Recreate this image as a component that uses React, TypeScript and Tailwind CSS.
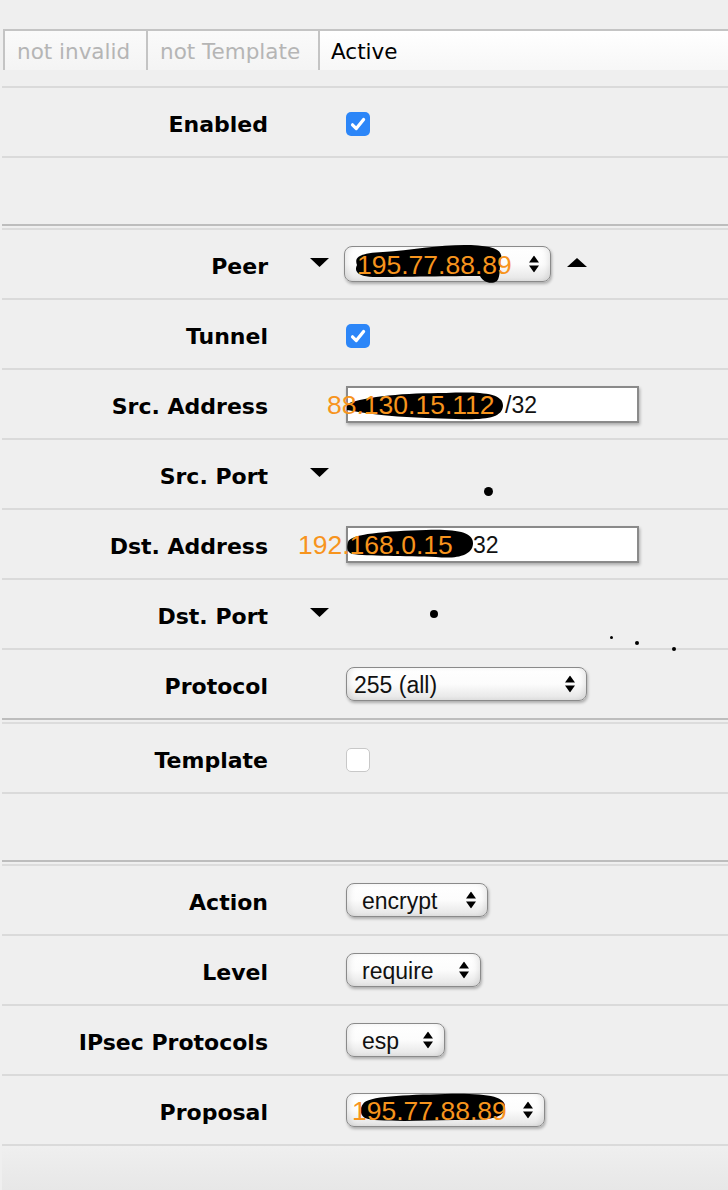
import React from "react";

const ORANGE = "text-[#f7941d]";

function DownTri() {
  return (
    <svg width="19" height="9" viewBox="0 0 19 9" className="-mt-[4px]">
      <polygon points="0,0 19,0 9.5,9" fill="#000" />
    </svg>
  );
}

function UpTri() {
  return (
    <svg width="20" height="9" viewBox="0 0 20 9" className="-mt-[4px]">
      <polygon points="0,9 20,9 10,0" fill="#000" />
    </svg>
  );
}

function Arrows() {
  return (
    <svg width="10" height="17" viewBox="0 0 10 17" className="absolute right-[11px] top-1/2 -translate-y-1/2">
      <polygon points="0,7 5,0 10,7" fill="#000" />
      <polygon points="0,10 10,10 5,17" fill="#000" />
    </svg>
  );
}

function Check({ on }: { on: boolean }) {
  if (!on)
    return <div className="w-[24px] h-[24px] rounded-[5px] bg-white border border-[#c8c8c8] mt-[4px]" />;
  return (
    <div className="w-[24px] h-[24px] rounded-[5px] bg-[#2c86f8] flex items-center justify-center mt-[4px]">
      <svg width="24" height="24" viewBox="0 0 24 24">
        <path d="M6.5 12.8 L10.3 16.6 L17.6 7.4" fill="none" stroke="#fff" strokeWidth="3.2" strokeLinecap="round" strokeLinejoin="round" />
      </svg>
    </div>
  );
}

const labelCls =
  "w-[266px] text-right font-['DejaVu_Sans',Verdana,sans-serif] font-bold text-[22px] leading-none text-black translate-y-[3px]";

function Row({
  label,
  slot,
  children,
}: {
  label: string;
  slot?: React.ReactNode;
  children?: React.ReactNode;
}) {
  return (
    <div className="flex items-center h-[70px] border-b-2 border-[#dadada]">
      <div className={labelCls}>{label}</div>
      <div className="w-[78px] flex items-center pl-[42px]">{slot}</div>
      <div className="flex-1 flex items-center">{children}</div>
    </div>
  );
}

const selectBase =
  "relative flex items-center pt-[3px] rounded-[8px] border-[1.5px] border-[#8a8a8a] bg-linear-to-b from-white via-[#fcfcfc] to-[#e4e4e4] shadow-[inset_5px_0_6px_-3px_rgba(0,0,0,0.10),inset_-5px_0_6px_-3px_rgba(0,0,0,0.10),1px_2px_3px_rgba(0,0,0,0.28)] font-['Liberation_Sans',Arial,sans-serif] leading-none text-[#111]";

const inputBase =
  "relative flex items-center pt-[3px] bg-white border-2 border-[#8a8a8a] shadow-[1px_2px_3px_rgba(0,0,0,0.28)] w-[293px] h-[37px] font-['Liberation_Sans',Arial,sans-serif] leading-none text-[#111] text-[23px]";

export default function App() {
  return (
    <div className="relative w-[728px] h-[1190px] bg-[#efefef] flex flex-col overflow-hidden">
      <div className="h-[29px]" />
      {/* tabs */}
      <div className="flex h-[41px] ml-[3px] font-['DejaVu_Sans',Verdana,sans-serif] text-[21.5px] leading-none">
        <div className="w-[143px] border-t-2 border-l-2 border-[#c4c4c4] bg-linear-to-b from-[#fafafa] to-[#f4f4f4] flex items-center pl-[12px] pt-[2px] text-[#b5b5b5]">
          not invalid
        </div>
        <div className="w-[172px] border-t-2 border-l-2 border-[#c4c4c4] bg-linear-to-b from-[#fafafa] to-[#f4f4f4] flex items-center pl-[12px] pt-[2px] text-[#b5b5b5]">
          not Template
        </div>
        <div className="flex-1 border-t-2 border-l-2 border-[#c4c4c4] bg-linear-to-b from-white to-[#f7f7f7] flex items-center pl-[11px] pt-[2px] text-black">
          Active
        </div>
      </div>
      <div className="h-[16px]" />

      <div className="ml-[2px] flex flex-col flex-1">
        <div className="h-[2px] bg-[#dadada]" />
        <Row label="Enabled">
          <Check on />
        </Row>
        <div className="h-[68px] border-b-2 border-[#bdbdbd]" />
        <div className="h-[4px] border-b-2 border-[#dcdcdc]" />

        <Row label="Peer" slot={<DownTri />}>
          <div className={`${selectBase} w-[207px] h-[36px] -ml-[2px] pl-[12px]`}>
            <svg className="absolute -left-[2px] -top-[2px] overflow-visible" width="210" height="40">
              <path
                d="M14 20 C10 10, 22 8, 40 7 C70 5, 100 -1, 128 0 C150 1, 160 5, 158 13 C156 21, 158 31, 154 36 C148 40, 140 37, 137 31 C110 31, 60 32, 30 32 C18 32, 10 28, 14 20 Z"
                fill="#000"
              />
            </svg>
            <span className={`relative z-10 ${ORANGE} text-[26.5px]`}>195.77.88.89</span>
            <Arrows />
          </div>
          <div className="ml-[16px] flex items-center">
            <UpTri />
          </div>
        </Row>

        <Row label="Tunnel">
          <Check on />
        </Row>

        <Row label="Src. Address">
          <div className={`${inputBase} pl-[157px]`}>
            <svg className="absolute -left-[2px] -top-[2px] overflow-visible" width="293" height="37">
              <path
                d="M1 18 C20 10, 60 7, 100 7 C130 6, 158 6, 157 20 C156 32, 140 34, 110 33 C70 32, 30 30, 1 24 Z"
                fill="#000"
              />
            </svg>
            <span className={`absolute left-[-21px] top-1/2 -translate-y-[45%] z-10 ${ORANGE} text-[26.5px] whitespace-nowrap`}>
              88.130.15.112
            </span>
            <span className="relative">/32</span>
          </div>
        </Row>

        <Row label="Src. Port" slot={<DownTri />} />

        <Row label="Dst. Address">
          <div className={`${inputBase} pl-[125px]`}>
            <svg className="absolute -left-[2px] -top-[2px] overflow-visible" width="293" height="37">
              <path
                d="M2 16 C4 8, 40 5, 80 4 C110 3, 128 6, 127 18 C126 30, 110 33, 90 31 C60 30, 20 30, 6 28 C0 26, 1 20, 2 16 Z"
                fill="#000"
              />
            </svg>
            <span className={`absolute left-[-50px] top-1/2 -translate-y-[45%] z-10 ${ORANGE} text-[26.5px] whitespace-nowrap`}>
              192.168.0.15
            </span>
            <span className="relative">32</span>
          </div>
        </Row>

        <Row label="Dst. Port" slot={<DownTri />} />

        <div className="flex items-center h-[70px] border-b-2 border-[#bdbdbd]">
          <div className={labelCls}>Protocol</div>
          <div className="w-[78px]" />
          <div className={`${selectBase} w-[241px] h-[34px] pl-[7px] text-[23px]`}>
            255 (all)
            <Arrows />
          </div>
        </div>
        <div className="h-[4px] border-b-2 border-[#dcdcdc]" />

        <Row label="Template">
          <Check on={false} />
        </Row>
        <div className="h-[68px] border-b-2 border-[#bdbdbd]" />
        <div className="h-[4px] border-b-2 border-[#dcdcdc]" />

        <Row label="Action">
          <div className={`${selectBase} w-[142px] h-[34px] pl-[15px] text-[23px]`}>
            encrypt
            <Arrows />
          </div>
        </Row>
        <Row label="Level">
          <div className={`${selectBase} w-[135px] h-[34px] pl-[15px] text-[23px]`}>
            require
            <Arrows />
          </div>
        </Row>
        <Row label="IPsec Protocols">
          <div className={`${selectBase} w-[99px] h-[34px] pl-[15px] text-[23px]`}>
            esp
            <Arrows />
          </div>
        </Row>
        <Row label="Proposal">
          <div className={`${selectBase} w-[199px] h-[34px] pl-[5px]`}>
            <svg className="absolute -left-[2px] -top-[2px] overflow-visible" width="200" height="36">
              <path
                d="M18 12 C22 4, 60 3, 100 2 C140 1, 162 4, 160 16 C158 28, 140 28, 110 28 C70 29, 30 30, 20 26 C14 22, 15 16, 18 12 Z"
                fill="#000"
              />
            </svg>
            <span className={`relative z-10 ${ORANGE} text-[26.5px]`}>195.77.88.89</span>
            <Arrows />
          </div>
        </Row>
        <div className="flex-1 bg-linear-to-b from-[#efefef] to-[#e7e7e7]" />
      </div>

      {/* stray dots */}
      <div className="absolute left-[484px] top-[487px] w-[9px] h-[9px] rounded-full bg-black" />
      <div className="absolute left-[430px] top-[610px] w-[8px] h-[8px] rounded-full bg-black" />
      <div className="absolute left-[610px] top-[636px] w-[3px] h-[3px] rounded-full bg-black" />
      <div className="absolute left-[635px] top-[641px] w-[4px] h-[4px] rounded-full bg-black" />
      <div className="absolute left-[672px] top-[647px] w-[4px] h-[4px] rounded-full bg-black" />
    </div>
  );
}
